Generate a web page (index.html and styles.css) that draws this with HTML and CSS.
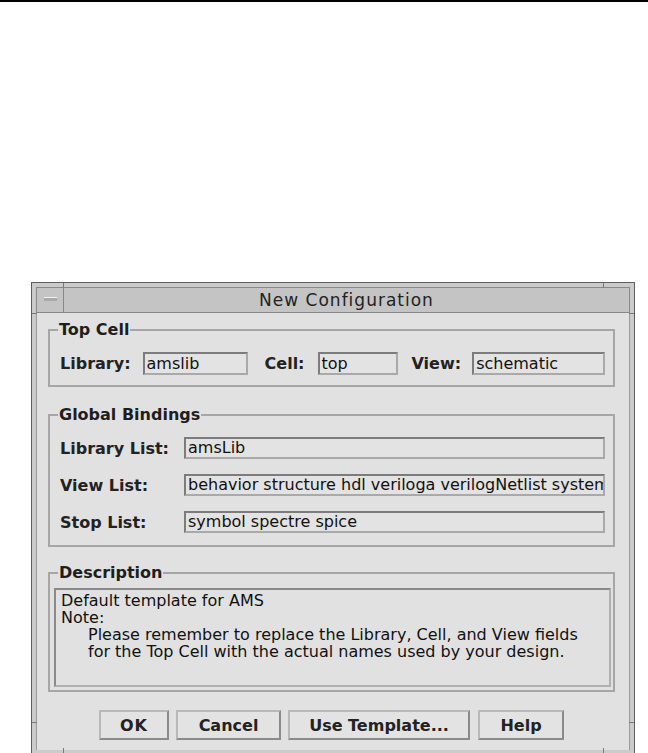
FILE: index.html
```html
<!DOCTYPE html>
<html lang="en">
<head>
  <meta charset="UTF-8" />
  <meta name="viewport" content="width=device-width, initial-scale=1.0" />
  <title>New Configuration</title>
  <link rel="stylesheet" href="styles.css">
</head>
<body>
  <div class="rule"></div>

  <div class="window">
    <!-- resize handle marks on the frame -->
    <span class="tick tick-v tick-tl"></span>
    <span class="tick tick-v tick-tr"></span>
    <span class="tick tick-v tick-bl"></span>
    <span class="tick tick-v tick-br"></span>
    <span class="tick tick-h tick-lt"></span>
    <span class="tick tick-h tick-rt"></span>
    <span class="tick tick-h tick-lb"></span>
    <span class="tick tick-h tick-rb"></span>

    <div class="titlebar">
      <div class="menu-btn"><span class="dash"></span></div>
      <div class="title">New Configuration</div>
    </div>

    <div class="content">
      <fieldset class="group group-top">
        <legend>Top Cell</legend>
        <div class="row">
          <span class="lbl">Library:</span>
          <div class="field f-lib">amslib</div>
          <span class="lbl lbl-cell">Cell:</span>
          <div class="field f-cell">top</div>
          <span class="lbl lbl-view">View:</span>
          <div class="field f-view">schematic</div>
        </div>
      </fieldset>

      <fieldset class="group group-bind">
        <legend>Global Bindings</legend>
        <div class="grid">
          <span class="lbl">Library List:</span>
          <div class="field">amsLib</div>
          <span class="lbl">View List:</span>
          <div class="field">behavior structure hdl veriloga verilogNetlist systemVerilog</div>
          <span class="lbl">Stop List:</span>
          <div class="field">symbol spectre spice</div>
        </div>
      </fieldset>

      <fieldset class="group group-desc">
        <legend>Description</legend>
        <div class="textarea">
          <div>Default template for AMS</div>
          <div>Note:</div>
          <div class="indent">Please remember to replace the Library, Cell, and View fields</div>
          <div class="indent">for the Top Cell with the actual names used by your design.</div>
        </div>
      </fieldset>

      <div class="buttons">
        <button class="btn btn-ok">OK</button>
        <button class="btn btn-cancel">Cancel</button>
        <button class="btn btn-template">Use Template...</button>
        <button class="btn btn-help">Help</button>
      </div>
    </div>
  </div>
</body>
</html>
```

FILE: styles.css
```css
body {
  margin: 0;
  background-color: #ffffff;
  font-family: "DejaVu Sans", sans-serif;
  font-size: 16px;
  color: #1a1a1a;
}
.rule {
  height: 2px;
  background-color: #000;
}

/* ventana estilo Motif */
.window {
  position: relative;
  box-sizing: border-box;
  width: 604px;
  height: 471px;
  margin: 280px 0 0 31px;
  padding: 4px 4px 3px 4px;
  border: 1px solid #5e5e5e;
  border-bottom: none;
  background-color: #cbcbcb;
  display: flex;
  flex-direction: column;
}
.tick {
  position: absolute;
  background-color: #7a7a7a;
}
.tick-v {
  width: 1px;
  height: 5px;
}
.tick-h {
  width: 5px;
  height: 1px;
}
.tick-tl { top: 0; left: 31px; }
.tick-tr { top: 0; left: 571px; }
.tick-bl { bottom: 0; left: 31px; }
.tick-br { bottom: 0; left: 571px; }
.tick-lt { left: 0; top: 30px; }
.tick-rt { right: 0; top: 30px; }
.tick-lb { left: 0; top: 439px; }
.tick-rb { right: 0; top: 439px; }

.titlebar {
  display: flex;
  height: 26px;
  box-sizing: border-box;
  border: 1px solid #888;
  background-color: #c4c4c4;
}
.menu-btn {
  width: 26px;
  border-right: 1px solid #888;
  display: flex;
  align-items: center;
  justify-content: center;
}
.dash {
  width: 13px;
  height: 3px;
  background-color: #a9a9a9;
  border-top: 1px solid #f2f2f2;
  margin-top: -2px;
}
.title {
  flex: 1;
  text-align: center;
  font-size: 17px;
  letter-spacing: 1px;
  line-height: 24px;
  color: #222;
}

.content {
  flex: 1;
  background-color: #e1e1e1;
  border-left: 1px solid #9a9a9a;
  border-right: 1px solid #9a9a9a;
  padding: 8px 14px 0 11px;
}

.group {
  margin: 0;
  border: 2px solid #a6a6a6;
  padding: 13px 8px 10px 10px;
  min-width: 0;
}
.group legend {
  font-weight: bold;
  line-height: 18px;
  padding: 0 1px;
  margin-left: -2px;
  color: #1e1e1e;
}
.group-bind {
  margin-top: 19px;
  padding-bottom: 12px;
}
.group-desc {
  margin-top: 17px;
  padding: 6px 2px 3px 4px;
}
.group-desc legend {
  margin-left: 4px;
}

.lbl {
  font-weight: bold;
  color: #222;
  white-space: nowrap;
}
.field {
  box-sizing: border-box;
  height: 23px;
  border: 2px solid;
  border-color: #7c7c7c #a9a9a9 #a9a9a9 #7c7c7c;
  background-color: #e3e3e3;
  padding: 0 2px;
  line-height: 19px;
  white-space: nowrap;
  overflow: hidden;
  color: #111;
}

.row {
  display: flex;
  align-items: center;
}
.row .lbl {
  margin-right: 12px;
}
.row .lbl-cell {
  margin-left: 17px;
  margin-right: 13px;
}
.row .lbl-view {
  margin-left: 14px;
  margin-right: 11px;
}
.f-lib { width: 105px; }
.f-cell { width: 80px; }
.f-view { flex: 1; }

.grid {
  display: grid;
  grid-template-columns: 124px 1fr;
  row-gap: 15px;
  align-items: center;
}
.grid .field {
  height: 22px;
  line-height: 18px;
}

.textarea {
  height: 99px;
  box-sizing: border-box;
  border: 2px solid;
  border-color: #8a8a8a #b0b0b0 #b0b0b0 #8a8a8a;
  padding: 2px 5px;
  line-height: 17px;
  color: #111;
}
.indent {
  padding-left: 27px;
}

.buttons {
  display: flex;
  justify-content: center;
  gap: 7px;
  margin-top: 18px;
}
.btn {
  height: 30px;
  box-sizing: border-box;
  border: 2px solid;
  border-color: #b9b9b9 #8a8a8a #8a8a8a #b9b9b9;
  background-color: #e3e3e3;
  font-family: "DejaVu Sans", sans-serif;
  font-size: 16px;
  font-weight: bold;
  color: #222;
  padding: 0;
}
.btn-ok { width: 70px; letter-spacing: 1px; }
.btn-cancel { width: 105px; }
.btn-template { width: 182px; }
.btn-help { width: 86px; margin-left: 1px; }
```
